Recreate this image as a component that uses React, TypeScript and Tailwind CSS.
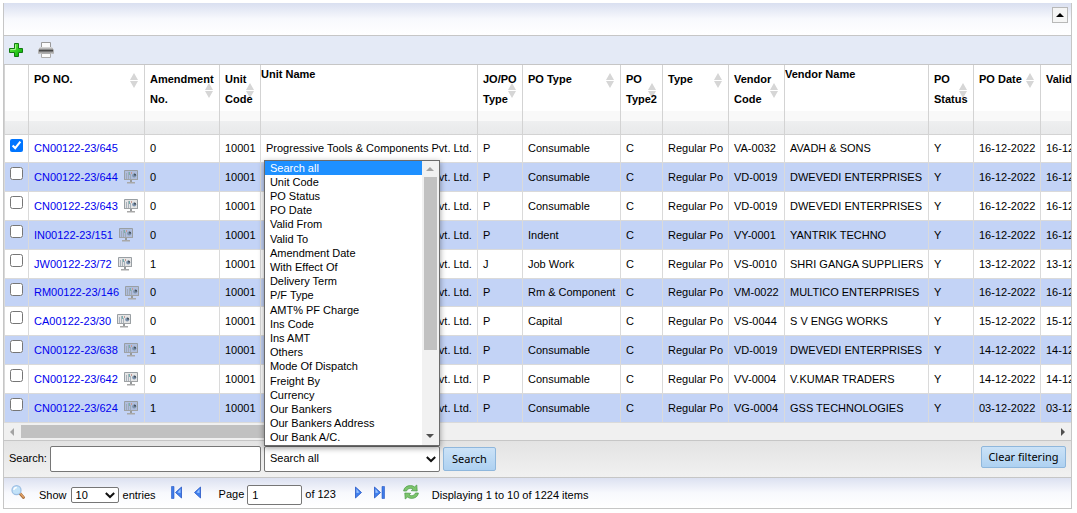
import React from "react";

type Column = { title: string; width: string; sortable: boolean };

const columns: Column[] = [
  { title: "PO NO.", width: "w-[116px]", sortable: true },
  { title: "Amendment No.", width: "w-[75px]", sortable: true },
  { title: "Unit Code", width: "w-[41px]", sortable: true },
  { title: "Unit Name", width: "w-[217px]", sortable: false },
  { title: "JO/PO Type", width: "w-[45px]", sortable: true },
  { title: "PO Type", width: "w-[98px]", sortable: true },
  { title: "PO Type2", width: "w-[42px]", sortable: true },
  { title: "Type", width: "w-[66px]", sortable: true },
  { title: "Vendor Code", width: "w-[56px]", sortable: true },
  { title: "Vendor Name", width: "w-[144px]", sortable: false },
  { title: "PO Status", width: "w-[45px]", sortable: true },
  { title: "PO Date", width: "w-[67px]", sortable: true },
  { title: "Valid From", width: "w-[80px]", sortable: true },
];

const unit = "Progressive Tools & Components Pvt. Ltd.";

const rows: string[][] = [
  ["CN00122-23/645", "0", "10001", unit, "P", "Consumable", "C", "Regular Po", "VA-0032", "AVADH & SONS", "Y", "16-12-2022", "16-12-2022"],
  ["CN00122-23/644", "0", "10001", unit, "P", "Consumable", "C", "Regular Po", "VD-0019", "DWEVEDI ENTERPRISES", "Y", "16-12-2022", "16-12-2022"],
  ["CN00122-23/643", "0", "10001", unit, "P", "Consumable", "C", "Regular Po", "VD-0019", "DWEVEDI ENTERPRISES", "Y", "16-12-2022", "16-12-2022"],
  ["IN00122-23/151", "0", "10001", unit, "P", "Indent", "C", "Regular Po", "VY-0001", "YANTRIK TECHNO", "Y", "16-12-2022", "16-12-2022"],
  ["JW00122-23/72", "1", "10001", unit, "J", "Job Work", "C", "Regular Po", "VS-0010", "SHRI GANGA SUPPLIERS", "Y", "13-12-2022", "13-12-2022"],
  ["RM00122-23/146", "0", "10001", unit, "P", "Rm & Component", "C", "Regular Po", "VM-0022", "MULTICO ENTERPRISES", "Y", "16-12-2022", "16-12-2022"],
  ["CA00122-23/30", "0", "10001", unit, "P", "Capital", "C", "Regular Po", "VS-0044", "S V ENGG WORKS", "Y", "15-12-2022", "15-12-2022"],
  ["CN00122-23/638", "1", "10001", unit, "P", "Consumable", "C", "Regular Po", "VD-0019", "DWEVEDI ENTERPRISES", "Y", "14-12-2022", "14-12-2022"],
  ["CN00122-23/642", "0", "10001", unit, "P", "Consumable", "C", "Regular Po", "VV-0004", "V.KUMAR TRADERS", "Y", "14-12-2022", "14-12-2022"],
  ["CN00122-23/624", "1", "10001", unit, "P", "Consumable", "C", "Regular Po", "VG-0004", "GSS TECHNOLOGIES", "Y", "03-12-2022", "03-12-2022"],
];

const searchFields = [
  "Search all", "Unit Code", "PO Status", "PO Date", "Valid From", "Valid To", "Amendment Date",
  "With Effect Of", "Delivery Term", "P/F Type", "AMT% PF Charge", "Ins Code", "Ins AMT", "Others",
  "Mode Of Dispatch", "Freight By", "Currency", "Our Bankers", "Our Bankers Address", "Our Bank A/C.",
];

function SortIcon() {
  return (
    <svg aria-hidden="true" width="8" height="15" viewBox="0 0 8 15" className="absolute top-1/2 right-1.5 -z-10 -mt-1.5 fill-[#d6d6d6]">
      <path d="M4 0 8 7H0zM0 8h8l-4 7z" />
    </svg>
  );
}

function PlusIcon() {
  return (
    <svg aria-hidden="true" width="16" height="16" viewBox="0 0 16 16">
      <defs>
        <linearGradient id="plus" x1="0" y1="0" x2="1" y2="1">
          <stop offset="0.2" stopColor="#5fe83c" />
          <stop offset="0.8" stopColor="#12b80c" />
        </linearGradient>
      </defs>
      <path d="M6.5 1.500h4v5h4v4h-4v4h-4v-4h-5v-4h5z" fill="url(#plus)" stroke="#127a12" strokeLinejoin="round" />
      <path d="M7.500 2.500v5h-5" fill="none" stroke="#a8f58f" />
    </svg>
  );
}

function PrinterIcon() {
  return (
    <svg aria-hidden="true" width="16" height="16" viewBox="0 0 16 16">
      <defs>
        <linearGradient id="printer" x1="0" y1="0" x2="0" y2="1">
          <stop offset="0" stopColor="#e2e2e2" />
          <stop offset="0.3" stopColor="#a8a8a8" />
          <stop offset="0.5" stopColor="#4a4a4a" />
          <stop offset="0.75" stopColor="#9a9a9a" />
          <stop offset="1" stopColor="#e0e0e0" />
        </linearGradient>
      </defs>
      <path d="M3.500 .5h9v6h-9z" fill="#fbfbfb" stroke="#9a9a9a" />
      <path d="M2.500 5.500h11l2 2.500v3.500h-15V8z" fill="#dedede" stroke="#b4b4b4" />
      <rect x="1" y="5" width="14" height="7" rx="2" fill="url(#printer)" />
      <path d="M3.500 11.500h9v4h-9z" fill="#fbfbfb" stroke="#adadad" />
    </svg>
  );
}

function MonitorIcon() {
  return (
    <svg aria-hidden="true" width="14" height="14" viewBox="0 0 14 14">
      <path d="M.5.5h13v9H.5z" fill="#000" fillOpacity=".1" stroke="#999fa3" />
      <path d="M2.500 3v6M4.500 2v7M6.500 4v5" stroke="#9aa5b0" strokeOpacity=".8" />
      <path d="M5.500 2v3" stroke="#78b0ae" />
      <path d="M7.500 2v2" stroke="#c59a94" />
      <circle cx="10.200" cy="5.500" r="2" fill="#7c92ad" />
      <path d="M10.200 3.500a2 2 0 0 1 2 2h-2z" fill="#3d4750" />
      <path d="M0 9.500h14" stroke="#a0a3a5" />
      <path d="M6 10h2v2H6z" fill="#96999b" />
      <path d="M3 12h8v1.500H3z" fill="#a8a8a8" />
    </svg>
  );
}

function MagnifierIcon() {
  return (
    <svg aria-hidden="true" width="14" height="14" viewBox="0 0 14 14">
      <path d="m9 8.500 3.500 4" stroke="#a8703f" strokeWidth="2.800" strokeLinecap="round" />
      <path d="m9.500 8.600 2.900 3.400" stroke="#e8a76b" strokeWidth="1.200" strokeLinecap="round" />
      <circle cx="5.500" cy="5.200" r="4.500" fill="#c2e2f8" stroke="#9dbfe4" strokeWidth="1.300" />
      <path d="M2.800 5a3 3 0 0 1 3-2.500" fill="none" stroke="#fff" strokeWidth="1.300" />
    </svg>
  );
}

function ArrowIcon({ last, flip }: { last?: boolean; flip?: boolean }) {
  return (
    <svg aria-hidden="true" width={last ? 11 : 7} height="13" viewBox={last ? "0 0 11 13" : "0 0 7 13"} className={flip ? "-scale-x-100" : ""}>
      <path d="M.5 1v11l6-5.500z" fill="#3f80ee" stroke="#2857c4" strokeWidth=".8" />
      <path d="M1.500 3v4l3-.5z" fill="#9cc4ff" />
      {last && <path d="M8 .5h2.500v12H8z" fill="#3f7ce8" stroke="#2857c4" strokeWidth=".6" />}
    </svg>
  );
}

function RefreshIcon() {
  return (
    <svg aria-hidden="true" width="16" height="16" viewBox="0 0 16 16" fill="#7cc46c" stroke="#4c9a48" strokeWidth=".7" strokeLinejoin="round">
      <path d="M.6 7C1 3.500 4 1.500 7.500 1.600c1.600 0 2.900.5 4 1.300L13.800 1l.4 6-6-.3 1.700-1.700C7.600 3.600 4.500 4.500 3.600 7z" />
      <path d="M15.400 9c-.4 3.500-3.400 5.500-6.900 5.400-1.600 0-2.900-.5-4-1.300L2.200 15l-.4-6 6 .3L6.100 11c2.300 1.400 5.400.5 6.300-2z" />
    </svg>
  );
}

function Chevron() {
  return (
    <svg aria-hidden="true" width="10" height="7" viewBox="0 0 10 7" className="pointer-events-none absolute top-1/2 right-1 -mt-[3px]">
      <path d="m.8 1 4.200 4L9.200 1" fill="none" stroke="#111" strokeWidth="2" />
    </svg>
  );
}

function Triangle({ d, className }: { d: string; className: string }) {
  return (
    <svg aria-hidden="true" width="8" height="8" viewBox="0 0 8 8" className={className}>
      <path d={d} />
    </svg>
  );
}

const buttonStyle =
  "rounded-[2px] border border-[#8fb7dc] bg-linear-to-b from-[#cbe2f7] to-[#aed1f1] text-center font-['Noto_Sans',sans-serif] text-[11px] leading-5 text-black";

function SearchFieldList() {
  return (
    <div className="absolute bottom-full left-0 z-10 flex h-[286px] w-full border border-[#6b6b6b] bg-white shadow-[0_2px_6px_rgba(0,0,0,0.4)]">
      <ul role="listbox" aria-label="Search fields" className="flex flex-1 flex-col">
        {searchFields.map((field, i) => (
          <li
            key={field}
            role="option"
            aria-selected={i === 0}
            className={i === 0 ? "flex flex-1 items-center bg-[#1e90ff] pl-[5px] leading-3 text-white" : "flex flex-1 items-center pl-[5px] leading-3"}
          >
            {field}
          </li>
        ))}
      </ul>
      <div className="flex w-[17px] flex-col items-center bg-[#f1f1f1]">
        <Triangle d="M0 6h8L4 2z" className="my-1 fill-[#a3a3a3]" />
        <div className="h-[173px] w-[13px] bg-[#c1c1c1]" />
        <Triangle d="M0 2h8L4 6z" className="mt-auto mb-[5px] fill-[#505050]" />
      </div>
    </div>
  );
}

export default function App() {
  return (
    <main className="mt-[3px] mr-[5px] ml-[3px] border border-t-0 border-[#c6c6c6] font-['Liberation_Sans',Arial,sans-serif] text-[11px] text-black">
      <header className="flex h-[33px] items-start justify-end border-b border-[#c6c6c6] bg-linear-to-b from-[#d9dff0] via-[#f8f9fd] via-50% to-white pt-1 pr-[3px]">
        <button aria-label="Collapse" className="flex size-4 items-center justify-center border border-[#b8b8b8] bg-[#f5f5f5]">
          <Triangle d="M0 6h8L4 2z" className="fill-black" />
        </button>
      </header>

      <div className="flex h-[29px] items-center gap-3.5 border-b border-[#c6c6c6] bg-[#e4eaf6] pb-px pl-1">
        <button aria-label="Add"><PlusIcon /></button>
        <button aria-label="Print"><PrinterIcon /></button>
      </div>

      <div className="overflow-hidden">
        <table className="w-[1117px] table-fixed border-separate border-spacing-0">
          <thead>
            <tr className="h-[70px] bg-[linear-gradient(#fff_46px,#f9f9f9_46px,#f9f9f9_56px,#eeeff0_56px,#e8e9ea)]">
              <th className="w-[25px] border-r border-b border-l border-[#d3d3d3]" />
              {columns.map((c) => (
                <th
                  key={c.title}
                  className={`${c.width} border-r border-b border-[#d3d3d3] text-left align-top leading-5 font-bold ${c.sortable ? "pt-1" : ""}`}
                >
                  <div className={c.sortable ? "relative isolate pl-[5px]" : "leading-[18px]"}>
                    {c.sortable && <SortIcon />}
                    {c.title}
                  </div>
                </th>
              ))}
            </tr>
          </thead>
          <tbody>
            {rows.map((row, r) => (
              <tr key={row[0]} className={`${r % 5 === 0 ? "h-7" : "h-[29px]"} ${r % 2 ? "bg-[#c3d3f6]" : "bg-white"}`}>
                <td className="border-r border-b border-l border-[#dadada] pt-1 pl-[5px] align-top">
                  <input type="checkbox" aria-label={`Select ${row[0]}`} defaultChecked={r === 0} className="block size-[13px]" />
                </td>
                {row.map((value, i) => (
                  <td key={i} className="border-r border-b border-[#dadada] pl-[5px] whitespace-nowrap">
                    {i === 0 ? (
                      <span className="flex items-center gap-1.5">
                        <a href="#" className="text-[#0000ee]">{value}</a>
                        {r > 0 && <MonitorIcon />}
                      </span>
                    ) : (
                      value
                    )}
                  </td>
                ))}
              </tr>
            ))}
          </tbody>
        </table>
      </div>

      <div className="flex h-[17px] items-center justify-between bg-[#f0f0f0] px-1">
        <Triangle d="M6 0v8L2 4z" className="fill-[#a3a3a3]" />
        <div className="mr-auto ml-[5px] h-[13px] w-[38%] bg-[#c1c1c1]" />
        <Triangle d="M2 0v8l4-4z" className="fill-[#505050]" />
      </div>

      <form className="flex h-[38px] items-center border-t border-b border-[#c6c6c6] bg-linear-to-b from-[#e3e3e3] to-[#f1f1f1] pb-px pl-[5px]">
        <label htmlFor="query" className="mr-[3px]">Search:</label>
        <input id="query" type="text" className="h-[26px] w-[211px] rounded-[2px] border border-[#767676] bg-white px-1" />
        <div className="relative ml-[3px] w-44">
          <select aria-label="Search field" className="block h-[26px] w-full appearance-none rounded-[2px] border border-[#767676] bg-white px-[5px]">
            {searchFields.map((f) => <option key={f}>{f}</option>)}
          </select>
          <Chevron />
          <SearchFieldList />
        </div>
        <button type="button" className={`${buttonStyle} ml-[3px] h-6 w-[53px]`}>Search</button>
        <button type="button" className={`${buttonStyle} mr-[5px] mb-1 ml-auto h-[22px] w-[85px]`}>Clear filtering</button>
      </form>

      <footer className="flex h-[30px] items-center bg-linear-to-b from-[#dce1f1] via-[#f8f9fd] via-50% to-white pl-[7px]">
        <button aria-label="Find" className="mr-3.5 pb-0.5"><MagnifierIcon /></button>
        <div className="flex items-center gap-1 pt-1">
          <label htmlFor="size">Show</label>
          <div className="relative w-12">
            <select id="size" className="block h-4 w-full appearance-none rounded-[2px] border border-[#767676] bg-white px-1 leading-3">
              <option>10</option>
            </select>
            <Chevron />
          </div>
          <span>entries</span>
        </div>
        <div className="ml-[15px] flex gap-3 pb-0.5">
          <button aria-label="First page"><ArrowIcon last flip /></button>
          <button aria-label="Previous page"><ArrowIcon flip /></button>
        </div>
        <div className="ml-[18px] flex items-center gap-[3px] pt-[3px]">
          <label htmlFor="page">Page</label>
          <input id="page" type="text" defaultValue="1" className="h-5 w-[55px] rounded-[2px] border border-[#767676] bg-white px-1" />
          <span>of 123</span>
        </div>
        <div className="ml-[19px] flex gap-3 pb-0.5">
          <button aria-label="Next page"><ArrowIcon /></button>
          <button aria-label="Last page"><ArrowIcon last /></button>
        </div>
        <button aria-label="Refresh" className="ml-[18px] pb-0.5"><RefreshIcon /></button>
        <p className="ml-[13px] pt-1">Displaying 1 to 10 of 1224 items</p>
      </footer>
    </main>
  );
}
